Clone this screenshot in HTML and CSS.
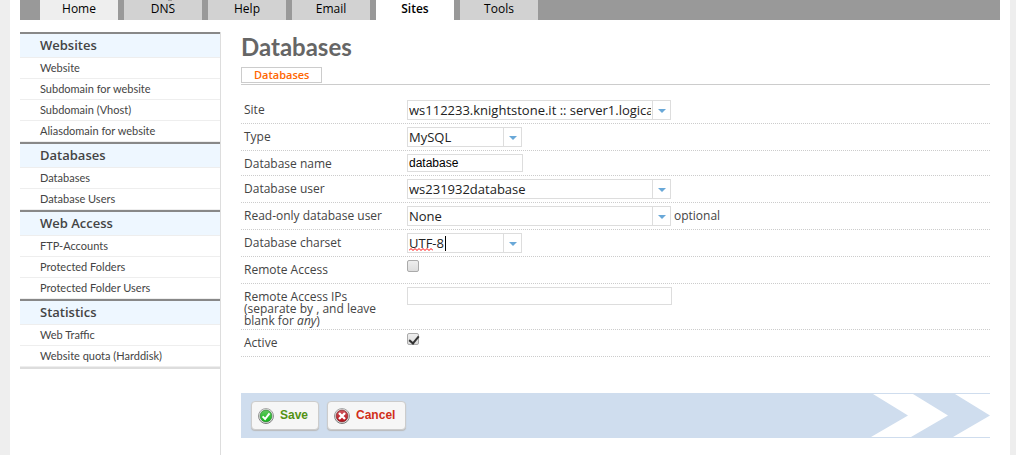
FILE: index.html
```
<!DOCTYPE html>
<html lang="en">
<head>
<meta charset="utf-8">
<title>Databases</title>
<link rel="stylesheet" href="styles.css">
</head>
<body>
<div class="page">
  <nav class="topnav">
    <a class="tab tab-home" href="#">Home</a>
    <a class="tab tab-dns" href="#">DNS</a>
    <a class="tab" href="#">Help</a>
    <a class="tab" href="#">Email</a>
    <a class="tab tab-active" href="#">Sites</a>
    <a class="tab" href="#">Tools</a>
  </nav>
  <div class="columns">
    <aside class="sidebar">
      <div class="menu">
        <h2 class="menu-title">Websites</h2>
        <a class="menu-item" href="#">Website</a>
        <a class="menu-item" href="#">Subdomain for website</a>
        <a class="menu-item" href="#">Subdomain (Vhost)</a>
        <a class="menu-item" href="#">Aliasdomain for website</a>
        <h2 class="menu-title">Databases</h2>
        <a class="menu-item" href="#">Databases</a>
        <a class="menu-item" href="#">Database Users</a>
        <h2 class="menu-title">Web Access</h2>
        <a class="menu-item" href="#">FTP-Accounts</a>
        <a class="menu-item" href="#">Protected Folders</a>
        <a class="menu-item" href="#">Protected Folder Users</a>
        <h2 class="menu-title">Statistics</h2>
        <a class="menu-item" href="#">Web Traffic</a>
        <a class="menu-item" href="#">Website quota (Harddisk)</a>
      </div>
    </aside>
    <main class="content">
      <h1 class="title">Databases</h1>
      <div class="subtabs"><a class="subtab" href="#">Databases</a></div>
      <form class="form">
        <div class="row">
          <label class="label" for="site">Site</label>
          <div class="combo combo-wide"><select class="select" id="site"><option>ws112233.knightstone.it :: server1.logical</option></select></div>
        </div>
        <div class="row">
          <label class="label" for="type">Type</label>
          <div class="combo"><select class="select" id="type"><option>MySQL</option></select></div>
        </div>
        <div class="row row-text">
          <label class="label" for="name">Database name</label>
          <input class="text" id="name" type="text" value="database">
        </div>
        <div class="row">
          <label class="label" for="user">Database user</label>
          <div class="combo combo-wide"><select class="select" id="user"><option>ws231932database</option></select></div>
        </div>
        <div class="row">
          <label class="label" for="rouser">Read-only database user</label>
          <div class="combo combo-wide"><select class="select" id="rouser"><option>None</option></select></div>
          <span class="hint">optional</span>
        </div>
        <div class="row">
          <label class="label" for="charset">Database charset</label>
          <div class="combo combo-editing"><select class="select" id="charset"><option>UTF-8</option></select>
            <svg class="squiggle" width="24" height="3" viewBox="0 0 24 3"><path d="M0 2.5l2-2 2 2 2-2 2 2 2-2 2 2 2-2 2 2 2-2 2 2 2-2 2 2" fill="none" stroke="#f00"/></svg>
          </div>
        </div>
        <div class="row">
          <label class="label" for="remote">Remote Access</label>
          <input class="check" id="remote" type="checkbox">
        </div>
        <div class="row row-tall">
          <label class="label" for="ips">Remote Access IPs (separate by , and leave blank for <em>any</em>)</label>
          <input class="text text-wide" id="ips" type="text">
        </div>
        <div class="row">
          <label class="label" for="active">Active</label>
          <input class="check" id="active" type="checkbox" checked>
        </div>
        <div class="actions">
          <button class="button button-save" type="button">
            <svg width="16" height="16" viewBox="0 0 16 16"><defs><linearGradient id="ring" x2="0" y2="1"><stop stop-color="#aaa"/><stop offset="1" stop-color="#777"/></linearGradient><linearGradient id="green" x2="0" y2="1"><stop stop-color="#62c85e"/><stop offset="1" stop-color="#10b818"/></linearGradient></defs><circle cx="8" cy="8" r="7.5" fill="#e4e4e4" stroke="url(#ring)"/><circle cx="8" cy="8" r="5.9" fill="url(#green)" stroke="#35813a" stroke-width=".7"/><path d="M4.6 8.4l2.5 2.6 4.4-5.6" fill="none" stroke="#fff" stroke-width="2"/></svg>
            Save</button>
          <button class="button button-cancel" type="button">
            <svg width="16" height="16" viewBox="0 0 16 16"><defs><linearGradient id="red" x2="0" y2="1"><stop stop-color="#d0565c"/><stop offset="1" stop-color="#b50d17"/></linearGradient></defs><circle cx="8" cy="8" r="7.5" fill="#e4e4e4" stroke="url(#ring)"/><circle cx="8" cy="8" r="5.9" fill="url(#red)" stroke="#7d2b2f" stroke-width=".7"/><path d="M5 5l6 6M11 5l-6 6" stroke="#fff" stroke-width="2.4"/></svg>
            Cancel</button>
          <svg class="chevrons" width="120" height="43" viewBox="0 0 120 43"><path d="M3 0h40l35 21.500L41 43H1l37-21.500zM85 0h35v21.500zM83 43l37-21.500V43z" fill="#fff"/></svg>
        </div>
      </form>
    </main>
  </div>
</div>
</body>
</html>
```
FILE: styles.css
```
* { box-sizing: border-box; }
body {
  margin: 0;
  background: #eee;
  color: #444;
  font: 12px/12px "Trebuchet MS", "Open Sans", sans-serif;
}
a { color: inherit; text-decoration: none; }
.page {
  display: flex;
  flex-direction: column;
  min-height: 100vh;
  margin: 0 6px 0 10px;
  padding: 0 10px;
  background: #fff;
}
.topnav {
  display: flex;
  gap: 6px;
  height: 20px;
  padding-left: 20px;
  background: #999;
}
.tab {
  position: relative;
  width: 78px;
  background: #d2d2d2;
  color: #000;
  line-height: 18px;
  text-align: center;
}
.tab-home { background: #eee; }
.tab-active { background: #fff; font-weight: 600; }
.tab-dns::before {
  content: "";
  position: absolute;
  top: 0;
  left: 44px;
  width: 4px;
  height: 1px;
  background: #999;
}
.columns { display: flex; flex: 1; padding-top: 12px; }
.sidebar { flex: 0 0 201px; border-right: 1px solid #ddd; }
.menu { border-bottom: 2px solid #ddd; }
.menu-title {
  margin: 0;
  padding-left: 20px;
  border-top: 2px solid #888;
  border-bottom: 1px solid #eee;
  background: #eef7ff;
  font-size: 13px;
  font-weight: 600;
  line-height: 23px;
}
.menu-item {
  display: block;
  padding-left: 20px;
  border-bottom: 1px solid #eee;
  font-family: "Trebuchet MS", Lato, sans-serif;
  font-size: 11px;
  line-height: 20px;
}
.content { flex: 1; min-width: 0; padding: 0 10px 0 20px; }
.title {
  margin: 0 0 5px;
  color: #666;
  font-family: "Trebuchet MS", Lato, sans-serif;
  font-size: 24px;
  font-weight: 700;
  line-height: 30px;
}
.subtabs { display: flex; height: 18px; border-bottom: 1px solid #ccc; }
.subtab {
  height: 16px;
  padding: 0 12px;
  border: 1px solid #ccc;
  color: #f60;
  font-size: 11px;
  font-weight: 600;
  line-height: 14px;
}
.form { padding-top: 12px; }
.row {
  display: flex;
  align-items: flex-start;
  min-height: 27px;
  padding: 3px 0 2px 3px;
  border-bottom: 1px dotted #ccc;
}
.row-text { min-height: 25px; }
.row-tall { min-height: 46px; }
.label { width: 163px; padding: 4px 20px 0 0; }
.combo {
  position: relative;
  width: 115px;
  height: 20px;
  border: 1px solid #ddd;
}
.combo::after {
  content: "";
  position: absolute;
  top: 8px;
  right: 4px;
  border: 4px solid transparent;
  border-top-color: #69a8d8;
  border-bottom: 0;
  pointer-events: none;
}
.combo-wide { width: 264px; }
.select {
  display: block;
  width: 100%;
  height: 18px;
  padding: 0 19px 0 1px;
  border: 0;
  appearance: none;
  background: linear-gradient(#ddd, #ddd) right 17px top / 1px 100% no-repeat #fff;
  color: #222;
  font: 13px/18px "Trebuchet MS", "Open Sans", sans-serif;
}
.combo-editing::before {
  content: "";
  position: absolute;
  top: 2px;
  left: 37px;
  width: 1px;
  height: 15px;
  background: #000;
}
.squiggle { position: absolute; top: 14px; left: 1px; }
.text {
  width: 116px;
  height: 18px;
  padding: 0 1px;
  border: 1px solid #ddd;
  background: #fff;
  color: #000;
  font: 12px/16px "Liberation Sans", Arial, sans-serif;
}
.text-wide { width: 265px; }
.hint { padding: 4px 0 0 3px; }
.check {
  position: relative;
  width: 12px;
  height: 12px;
  margin: 0;
  border: 1px solid #aaa;
  border-radius: 2px;
  appearance: none;
  background: linear-gradient(#eee, #ddd);
}
.check:checked::after {
  content: "";
  position: absolute;
  top: 0;
  left: 3px;
  width: 4px;
  height: 8px;
  border: solid #333;
  border-width: 0 2px 2px 0;
  transform: rotate(40deg);
}
.actions {
  position: relative;
  display: flex;
  align-items: flex-start;
  gap: 8px;
  margin-top: 36px;
  padding: 8px 10px;
  background: #cfddee;
}
.button {
  display: flex;
  align-items: center;
  gap: 6px;
  height: 29px;
  padding: 0 10px 2px 6px;
  border: 1px solid #ccc;
  border-radius: 4px;
  background: #f6f6f6;
  box-shadow: 0 1px 1px #bbb;
  font: bold 12px/16px "Liberation Sans", Arial, sans-serif;
}
.button svg:first-child { margin-top: 2px; }
.button-save { color: #529214; }
.button-cancel { color: #d12f19; }
.chevrons { position: absolute; top: 1px; right: 0; }
```
